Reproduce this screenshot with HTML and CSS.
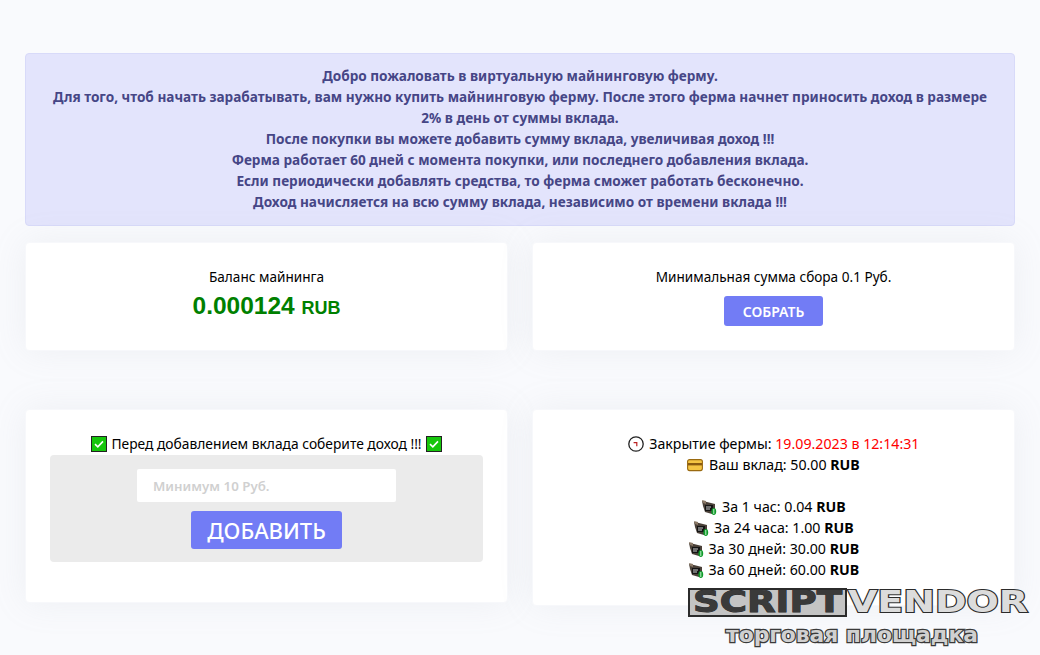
FILE: index.html
```html
<!DOCTYPE html>
<html lang="ru">
<head>
<meta charset="utf-8">
<title>Майнинг</title>
<link rel="stylesheet" href="styles.css">
</head>
<body>
<svg class="defs" width="0" height="0" aria-hidden="true">
  <symbol id="check" viewBox="0 0 16 16"><rect x=".5" y=".5" width="15" height="15" fill="#16c60c" stroke="#222"/><path d="M4 8.2l2.8 2.6L12 5.4" fill="none" stroke="#fff" stroke-width="1.6"/></symbol>
  <symbol id="money" viewBox="0 0 16 15"><path d="M1 1l5 1 8 2v7l-3 3-7-2-2-6z" fill="#4a4038"/><path d="M4 5h8v6H4z" fill="#141414"/><path d="M5 6.5h5v1H5zM5 8.5h4v1H5z" fill="#ccc"/><path d="M1 0l4 1v3L2 3z" fill="#8a7866"/><ellipse cx="12.8" cy="11.5" rx="2.4" ry="3.4" fill="#109a2a"/><path d="M12.8 9v5" stroke="#bff0c8"/></symbol>
</svg>
<main class="page">
  <section class="alert">
    Добро пожаловать в виртуальную майнинговую ферму.<br>
    Для того, чтоб начать зарабатывать, вам нужно купить майнинговую ферму. После этого ферма начнет приносить доход в размере 2% в день от суммы вклада.<br>
    После покупки вы можете добавить сумму вклада, увеличивая доход !!!<br>
    Ферма работает 60 дней с момента покупки, или последнего добавления вклада.<br>
    Если периодически добавлять средства, то ферма сможет работать бесконечно.<br>
    Доход начисляется на всю сумму вклада, независимо от времени вклада !!!
  </section>
  <div class="row row-top">
    <section class="card">
      <div>Баланс майнинга</div>
      <div class="balance">0.000124 <small>RUB</small></div>
    </section>
    <section class="card">
      <div>Минимальная сумма сбора 0.1 Руб.</div>
      <button class="btn btn-small" type="button">СОБРАТЬ</button>
    </section>
  </div>
  <div class="row row-bottom">
    <section class="card card-deposit">
      <div class="with-icons"><svg class="ico-check"><use href="#check"/></svg> Перед добавлением вклада соберите доход !!! <svg class="ico-check"><use href="#check"/></svg></div>
      <form class="deposit">
        <input class="amount" type="text" placeholder="Минимум 10 Руб.">
        <button class="btn btn-large" type="button">ДОБАВИТЬ</button>
      </form>
    </section>
    <section class="card card-stats">
      <div><svg class="ico ico-clock" viewBox="0 0 16 16"><circle cx="8" cy="8" r="7.2" fill="#fff" stroke="#222" stroke-width="1.3"/><path d="M5.6 6.6h3.2v3.6" fill="none" stroke="#b22" stroke-width="1.2"/></svg> Закрытие фермы: <span class="danger">19.09.2023 в 12:14:31</span></div>
      <div><svg class="ico ico-card" viewBox="0 0 16 14"><rect x=".6" y="1.6" width="14.8" height="11" rx="2" fill="#f5c543" stroke="#9a6a10" stroke-width="1.1"/><path d="M1 5h14v2.4H1z" fill="#8a5a10"/></svg> Ваш вклад: 50.00 <b>RUB</b></div>
      <div class="blank">&nbsp;</div>
      <div><svg class="ico-money"><use href="#money"/></svg> За 1 час: 0.04 <b>RUB</b></div>
      <div><svg class="ico-money"><use href="#money"/></svg> За 24 часа: 1.00 <b>RUB</b></div>
      <div><svg class="ico-money"><use href="#money"/></svg> За 30 дней: 30.00 <b>RUB</b></div>
      <div><svg class="ico-money"><use href="#money"/></svg> За 60 дней: 60.00 <b>RUB</b></div>
    </section>
  </div>
</main>
<svg class="watermark" width="350" height="75" viewBox="0 0 350 75">
  <rect x="4" y="9" width="157" height="27" fill="#c4c4c4" stroke="#2b2b2b" stroke-width="2"/>
  <text class="wm-main wm-dark" x="8" y="32" textLength="149" lengthAdjust="spacingAndGlyphs">SCRIPT</text>
  <text class="wm-main" x="163" y="32" textLength="180" lengthAdjust="spacingAndGlyphs">VENDOR</text>
  <text class="wm-sub" x="41" y="62" textLength="252" lengthAdjust="spacingAndGlyphs">торговая площадка</text>
</svg>
</body>
</html>
```
FILE: styles.css
```css
* { box-sizing: border-box; }
html, body { margin: 0; height: 655px; overflow: hidden; }
body {
  position: relative;
  background: #f9fafd;
  color: #000;
  font: 13.6px/21px "Noto Sans", "Open Sans", sans-serif;
}
.defs { position: absolute; }
.page { padding: 53px 25px 0; }
.alert {
  padding: 11px 24px 13px;
  background: #e3e4fc;
  border: 1px solid #d8daf9;
  border-radius: 4px;
  color: #464686;
  font-weight: 700;
  text-align: center;
}
.row {
  display: grid;
  grid-template-columns: 483px 483px;
  justify-content: space-between;
  align-items: start;
}
.row-top { margin-top: 16px; }
.row-bottom { margin-top: 58px; }
.card {
  padding: 23px 24px 25px;
  background: #fff;
  border: 1px solid #f7f8fb;
  border-radius: 4px;
  box-shadow: 0 0 35px rgba(154, 161, 171, .12);
  text-align: center;
}
.row-top .card { height: 109px; }
.balance {
  margin-top: 3px;
  color: #008000;
  font: 700 24.5px/32px "Liberation Sans", Arial, sans-serif;
}
.balance small { font-size: 18px; }
.btn {
  display: block;
  margin: 0 auto;
  border: 0;
  border-radius: 3px;
  background: #727cf5;
  color: #fff;
  font-family: inherit;
}
.btn-small { width: 99px; height: 30px; margin-top: 9px; font-size: 14px; font-weight: 600; }
.btn-large { width: 151px; height: 38px; margin-top: 9px; font-size: 22px; font-weight: 500; }
.with-icons { font-size: 13.8px; white-space: nowrap; }
.ico-check { width: 16px; height: 16px; margin: 0 1px; vertical-align: -3px; }
.deposit {
  height: 107px;
  margin-top: 1px;
  padding-top: 14px;
  background: #ebebeb;
  border-radius: 4px;
}
.amount {
  display: block;
  width: 259px;
  height: 33px;
  margin: 0 auto;
  padding: 0 16px;
  border: 0;
  border-radius: 2px;
  background: #fff;
  font: 600 13.3px "Noto Sans", "Open Sans", sans-serif;
}
.amount::placeholder { color: #d0d0d0; opacity: 1; }
.card-deposit { height: 194px; }
.card-stats { font-size: 14.2px; }
.danger { color: #f00; }
.ico { width: 16px; height: 16px; margin-right: 2px; vertical-align: -3px; }
.ico-card { height: 14px; vertical-align: -2px; }
.ico-money { width: 16px; height: 15px; margin-right: 1px; vertical-align: -3px; }
.watermark { position: absolute; left: 685px; top: 580px; }
.wm-main {
  font: 700 30px "DejaVu Sans", sans-serif;
  fill: #dcdcdc;
  stroke: #2b2b2b;
  stroke-width: 2px;
  paint-order: stroke;
}
.wm-dark { fill: #3a3a3a; stroke-width: 1px; }
.wm-sub {
  font: 700 22px "DejaVu Sans", sans-serif;
  fill: #d0d0d0;
  stroke: #3a3a3a;
  stroke-width: 2.5px;
  paint-order: stroke;
}
```
